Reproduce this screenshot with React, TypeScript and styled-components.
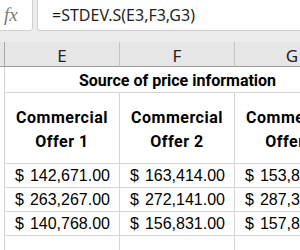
import { Fragment } from "react";
import styled, { createGlobalStyle } from "styled-components";

const GlobalStyle = createGlobalStyle`
  html, body {
    margin: 0;
    padding: 0;
    width: 300px;
    height: 250px;
    overflow: hidden;
    background: #ffffff;
  }
`;

const Window = styled.div`
  width: 300px;
  height: 250px;
  overflow: hidden;
`;

const FormulaBar = styled.div`
  display: flex;
  gap: 4px;
  height: 43px;
  background: #ececec;
  padding-bottom: 11px;
  box-sizing: border-box;
  margin-top: -1px;
`;

const FxBox = styled.div`
  width: 34px;
  margin-left: -1px;
  background: #ffffff;
  border: 1px solid #d0d0d0;
  border-radius: 0 0 3px 0;
  box-sizing: border-box;
  display: flex;
  align-items: center;
  padding-left: 4px;
  font-family: "Liberation Serif", serif;
  font-style: italic;
  font-size: 19px;
  color: #7a7a7a;
`;

const FormulaInput = styled.div`
  flex: 1;
  background: #ffffff;
  border: 1px solid #d0d0d0;
  border-right: none;
  border-radius: 0 0 0 3px;
  box-sizing: border-box;
  display: flex;
  align-items: center;
  padding-left: 14px;
  font-family: "Noto Sans", sans-serif;
  font-size: 16px;
  color: #1f1f1f;
  white-space: nowrap;
`;

const Sheet = styled.div`
  display: grid;
  grid-template-columns: 5px repeat(3, 115px);
  grid-template-rows: 25px 26px 71px repeat(4, 24px);
  width: 350px;
`;

const ColHeader = styled.div<{ $gutter?: boolean }>`
  background: #e6e6e6;
  border-bottom: 1px solid #9c9c9c;
  border-right: 1px solid ${({ $gutter }) => ($gutter ? "#a8a8a8" : "#c4c4c4")};
  box-sizing: border-box;
  display: flex;
  align-items: center;
  justify-content: center;
  padding-top: 2px;
  font-family: "Noto Sans", sans-serif;
  font-size: 17px;
  color: #222222;
`;

const Gutter = styled.div`
  border-right: 1px solid #d4d4d4;
  box-sizing: border-box;
`;

const TitleCell = styled.div`
  grid-column: 2 / span 3;
  border-bottom: 1px solid #d4d4d4;
  box-sizing: border-box;
  display: flex;
  align-items: center;
  justify-content: center;
  padding-top: 1px;
  font-family: Roboto, sans-serif;
  font-weight: 700;
  font-size: 16px;
  color: #000000;
  white-space: nowrap;
`;

const Cell = styled.div`
  border-right: 1px solid #d4d4d4;
  border-bottom: 1px solid #d4d4d4;
  box-sizing: border-box;
  white-space: nowrap;
  overflow: hidden;
`;

const HeadingCell = styled(Cell)`
  display: flex;
  flex-direction: column;
  align-items: center;
  justify-content: center;
  font-family: Roboto, sans-serif;
  font-weight: 700;
  font-size: 16px;
  letter-spacing: 0.5px;
  line-height: 24px;
  color: #000000;
  padding-top: 3px;
`;

const MoneyCell = styled(Cell)`
  display: flex;
  align-items: center;
  justify-content: space-between;
  padding: 1px 9px 0 10px;
  font-family: "Liberation Sans", Arial, sans-serif;
  font-size: 16px;
  color: #000000;
`;

const columns = ["E", "F", "G"];

const offers = [
  ["142,671.00", "163,414.00", "153,860.00"],
  ["263,267.00", "272,141.00", "287,310.00"],
  ["140,768.00", "156,831.00", "157,840.00"],
];

const App = () => {
  return (
    <Window>
      <GlobalStyle />
      <FormulaBar>
        <FxBox>fx</FxBox>
        <FormulaInput>=STDEV.S(E3,F3,G3)</FormulaInput>
      </FormulaBar>
      <Sheet>
        <ColHeader $gutter />
        {columns.map((c) => (
          <ColHeader key={c}>{c}</ColHeader>
        ))}

        <Gutter />
        <TitleCell>Source of price information</TitleCell>

        <Gutter />
        {columns.map((c, i) => (
          <HeadingCell key={c}>
            <span>Commercial</span>
            <span>Offer {i + 1}</span>
          </HeadingCell>
        ))}

        {offers.map((row, r) => (
          <Fragment key={r}>
            <Gutter />
            {row.map((v, i) => (
              <MoneyCell key={i}>
                <span>$</span>
                <span>{v}</span>
              </MoneyCell>
            ))}
          </Fragment>
        ))}

        <Gutter />
        <Cell />
        <Cell />
        <Cell />
      </Sheet>
    </Window>
  );
};

export default App;
